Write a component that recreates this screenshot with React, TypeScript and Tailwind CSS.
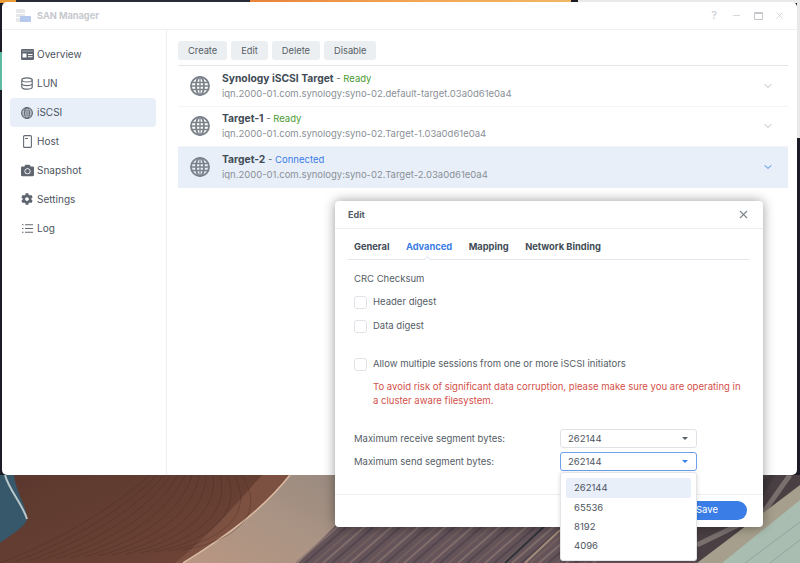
import { ChevronDown, Minus, X } from "lucide-react";
import { FaCamera, FaCog } from "react-icons/fa";
import type { ReactNode } from "react";

const font = { fontFamily: 'Inter, "Noto Sans", sans-serif' };

function Wallpaper() {
  const grain = Array.from({ length: 34 }, (_, i) => i);
  return (
    <svg className="absolute inset-0" width="800" height="563" viewBox="0 0 800 563">
      <defs>
        <linearGradient id="wood" x1="0" y1="0" x2="1" y2="0.3">
          <stop offset="0" stopColor="#5a372d" />
          <stop offset="0.55" stopColor="#6f4537" />
          <stop offset="0.9" stopColor="#4f2d26" />
        </linearGradient>
        <linearGradient id="band" x1="0" y1="1" x2="1" y2="0">
          <stop offset="0" stopColor="#b99682" />
          <stop offset="0.5" stopColor="#ab9484" />
          <stop offset="1" stopColor="#98897f" />
        </linearGradient>
        <linearGradient id="top" x1="0" y1="0" x2="1" y2="0">
          <stop offset="0" stopColor="#e8823a" />
          <stop offset="0.5" stopColor="#f2a553" />
          <stop offset="1" stopColor="#f0b766" />
        </linearGradient>
      </defs>
      <rect width="800" height="563" fill="#1b1c26" />
      <rect x="0" y="0" width="16" height="3" fill="#e79a35" />
      <rect x="16" y="0" width="234" height="3" fill="#2a2d38" />
      <rect x="250" y="0" width="321" height="3" fill="url(#top)" />
      <rect x="578" y="0" width="222" height="3" fill="#e9e9e9" />
      <rect x="797" y="3" width="3" height="135" fill="#e9e9e9" />
      <rect x="0" y="52" width="2" height="38" fill="#5fb8a0" />
      <rect x="0" y="475" width="800" height="88" fill="url(#wood)" />
      {/* blue rock, bottom left */}
      <path d="M0 475H14C16 492 26 505 27 518C27 526 12 534 0 543Z" fill="#37586a" />
      <path d="M5 475C9 490 23 505 27 519" stroke="#b9c8cb" strokeWidth="2" fill="none" />
      {/* pale band of the wood */}
      <path d="M262 475C235 505 215 530 175 563H270L330 475Z" fill="#7e5342" opacity="0.9" />
      <path d="M183 563C228 535 262 510 290 475H345V563Z" fill="url(#band)" />
      <path d="M183 563C228 535 262 510 290 475" stroke="#dcbba3" strokeWidth="1.500" fill="none" />
      <path d="M298 563L345 516L345 475H800V563Z" fill="#64545a" />
      {grain.map((i) => (
        <path
          key={i}
          d={`M${296 + i * 9} 563L${342 + i * 9} 523`}
          stroke={i % 3 === 0 ? "#8a7670" : i % 3 === 1 ? "#4e4148" : "#75625f"}
          strokeWidth="2"
          fill="none"
          opacity="0.75"
        />
      ))}
      <path d="M505 563L548 523" stroke="#2f3238" strokeWidth="2" fill="none" />
      <path d="M525 563L560 530" stroke="#a08a78" strokeWidth="2" fill="none" />
      {/* right side: dark streaks, tan line and pale sand */}
      <path d="M697 563V520L770 475H800V500L715 563Z" fill="#4a4044" />
      <path d="M697 545L763 513L790 475" stroke="#8d8580" strokeWidth="5" fill="none" opacity="0.7" />
      <path d="M697 527H763V475H775L745 527" fill="#3a3338" opacity="0.6" />
      <path d="M697 563L800 485V563Z" fill="#a69f8d" />
      <path d="M722 563L800 500V563Z" fill="#a9bdb1" />
      <path d="M745 563L800 522M770 563L800 540" stroke="#8fa6a0" strokeWidth="1" fill="none" />
      {grain.slice(0, 14).map((i) => (
        <path
          key={i}
          d={`M${i * 14} ${563 - i} C${60 + i * 14} 540 ${110 + i * 12} 510 ${150 + i * 7} 475`}
          stroke="#3f2420"
          strokeWidth="1"
          fill="none"
          opacity="0.3"
        />
      ))}
    </svg>
  );
}

function GlobeIcon({ size, color }: { size: number; color: string }) {
  return (
    <svg width={size} height={size} viewBox="0 0 20 20" fill="none" stroke={color} strokeWidth="1.900">
      <circle cx="10" cy="10" r="9" />
      <ellipse cx="10" cy="10" rx="4" ry="9" />
      <path d="M10 1v18M1.500 6.500h17M1 10h18M1.500 13.500h17" strokeWidth="1.300" />
    </svg>
  );
}

function DbIcon() {
  return (
    <svg width="12" height="13" viewBox="0 0 12 13" fill="none" stroke="#646b74" strokeWidth="1.200">
      <path d="M.8 3C.8 1.700 3 .8 6 .8s5.200.9 5.200 2.200v7c0 1.300-2.200 2.200-5.200 2.200S.8 11.300.8 10z" />
      <path d="M.8 3.500c.8 1 3 1.500 5.200 1.500s4.400-.5 5.200-1.500M.8 7.300c.8.800 3 1.300 5.200 1.300s4.400-.5 5.200-1.300" />
    </svg>
  );
}

const navItems: { label: string; icon: ReactNode; active?: boolean }[] = [
  {
    label: "Overview",
    icon: (
      <svg width="13" height="11" viewBox="0 0 13 11">
        <rect width="13" height="11" rx="1.200" fill="#5f6670" />
        <rect x="1" y="1.600" width="11" height="1" fill="#fff" opacity="0.4" />
        <rect x="1.500" y="4.500" width="4" height="4" fill="#fff" />
        <rect x="7" y="5" width="4.500" height="1" fill="#fff" />
        <rect x="7" y="7.200" width="4.500" height="1" fill="#fff" />
      </svg>
    ),
  },
  { label: "LUN", icon: <DbIcon /> },
  { label: "iSCSI", icon: <GlobeIcon size={12} color="#5f6670" />, active: true },
  {
    label: "Host",
    icon: (
      <svg width="9" height="13" viewBox="0 0 9 13" fill="none" stroke="#646b74" strokeWidth="1.100">
        <rect x="0.600" y="0.600" width="7.800" height="11.800" rx="1" />
        <path d="M2 3.500h3" />
      </svg>
    ),
  },
  { label: "Snapshot", icon: <FaCamera size={13} color="#5f6670" /> },
  { label: "Settings", icon: <FaCog size={12} color="#5f6670" /> },
  {
    label: "Log",
    icon: (
      <svg width="11" height="9" viewBox="0 0 11 9" fill="none" stroke="#646b74" strokeWidth="1.100">
        <path d="M0 .7h1.500M3 .7h8M0 4.500h1.500M3 4.500h8M0 8.300h1.500M3 8.300h8" />
      </svg>
    ),
  },
];

function Sidebar() {
  return (
    <aside className="w-[165px] shrink-0 border-r border-[#eceef0] pl-2 pr-[10px] pt-[10.500px]">
      {navItems.map((item) => (
        <div
          key={item.label}
          className={`flex h-[28.900px] items-center rounded-[4px] pl-2 text-[10px] text-[#4c545e] ${item.active ? "bg-[#e8eff9]" : ""}`}
        >
          <span className="flex w-[19px] justify-center pr-[1px]">{item.icon}</span>
          <span>{item.label}</span>
        </div>
      ))}
    </aside>
  );
}

const targets = [
  {
    name: "Synology iSCSI Target",
    status: "Ready",
    iqn: "iqn.2000-01.com.synology:syno-02.default-target.03a0d61e0a4",
  },
  { name: "Target-1", status: "Ready", iqn: "iqn.2000-01.com.synology:syno-02.Target-1.03a0d61e0a4" },
  {
    name: "Target-2",
    status: "Connected",
    iqn: "iqn.2000-01.com.synology:syno-02.Target-2.03a0d61e0a4",
    selected: true,
  },
];

function TargetList() {
  return (
    <div className="mt-[5px] border-t border-[#e3e5e8]">
      {targets.map((t) => (
        <div
          key={t.name}
          className={`flex h-[40.500px] items-center pl-[12px] pr-[14px] ${t.selected ? "bg-[#e8eff9]" : "border-b border-[#f3f4f5]"}`}
        >
          <GlobeIcon size={20} color="#7b828a" />
          <div className="ml-[12px] flex-1 leading-[15px]">
            <div className="text-[9.500px]">
              <span className="text-[10.300px] font-bold text-[#414b55]">{t.name}</span>
              <span className="text-[#5d656e]"> - </span>
              <span className={t.status === "Ready" ? "text-[#4a9a32]" : "text-[#3a7de6]"}>{t.status}</span>
            </div>
            <div className="text-[9.500px] text-[#8a9097]">{t.iqn}</div>
          </div>
          <ChevronDown size={12} color={t.selected ? "#3a7de6" : "#b8bcc2"} strokeWidth={2} />
        </div>
      ))}
    </div>
  );
}

function Checkbox({ label }: { label: string }) {
  return (
    <div className="flex items-center">
      <span className="h-[13px] w-[13px] rounded-[3px] border border-[#dfe3e8] bg-white" />
      <span className="ml-[6px] text-[9.500px] text-[#555d66]">{label}</span>
    </div>
  );
}

function SelectBox({ focused }: { focused?: boolean }) {
  return (
    <div
      className={`flex h-[19px] w-[137px] items-center justify-between rounded-[3px] border bg-white pl-[7px] pr-[8px] text-[9.500px] text-[#4c545e] ${focused ? "border-[#6d9fea]" : "border-[#dfe3e8]"}`}
    >
      262144
      <span
        className={`h-0 w-0 border-x-[3.500px] border-t-[3.500px] border-x-transparent ${focused ? "border-t-[#3a7de6]" : "border-t-[#555d66]"}`}
      />
    </div>
  );
}

function EditDialog() {
  const tabs = ["General", "Advanced", "Mapping", "Network Binding"];
  return (
    <div className="absolute left-[335px] top-[201px] flex h-[326px] w-[428px] flex-col rounded-[4px] bg-white shadow-[0_0_12px_rgba(0,0,0,0.4)]">
      <div className="flex h-[28px] shrink-0 items-center justify-between border-b border-[#eceef0] pl-[13px] pr-[13px]">
        <span className="text-[9px] font-bold text-[#555d66]">Edit</span>
        <X size={13} color="#7b828a" strokeWidth={2} />
      </div>
      <div className="relative mx-[13px] flex h-[31px] shrink-0 items-center gap-[16.500px] border-b border-[#e3e8ef] pl-[6px] pt-[5px] text-[9.300px] font-bold text-[#414b55]">
        {tabs.map((tab) => (
          <span key={tab} className={tab === "Advanced" ? "text-[#3a7de6]" : ""}>
            {tab}
          </span>
        ))}
        <span className="absolute bottom-[-3px] left-[77px] h-[5px] w-[5px] rotate-45 border-l border-t border-[#e3e8ef] bg-white" />
      </div>
      <div className="flex flex-1 flex-col px-[19px] pt-[12px]">
        <div className="text-[9.500px] leading-[13px] text-[#555d66]">CRC Checksum</div>
        <div className="mt-[10px] flex flex-col gap-[9.750px]">
          <Checkbox label="Header digest" />
          <Checkbox label="Data digest" />
        </div>
        <div className="mt-[23.750px]">
          <Checkbox label="Allow multiple sessions from one or more iSCSI initiators" />
        </div>
        <p className="ml-[19px] mt-[9px] text-[9.550px] leading-[14px] text-[#d4504a]">
          To avoid risk of significant data corruption, please make sure you are operating in a cluster aware
          filesystem.
        </p>
        <div className="mt-[21px] flex flex-col gap-[4px]">
          <div className="flex items-center justify-between pr-[47px] text-[9.500px] text-[#555d66]">
            Maximum receive segment bytes:
            <SelectBox />
          </div>
          <div className="flex items-center justify-between pr-[47px] text-[9.500px] text-[#555d66]">
            Maximum send segment bytes:
            <SelectBox focused />
          </div>
        </div>
      </div>
      <div className="flex h-[33px] shrink-0 items-start justify-end border-t border-[#eceef0] pr-[16px] pt-[6px]">
        <button className="h-[19px] w-[80px] rounded-full bg-[#3a7de6] text-[9.500px] text-white">Save</button>
      </div>
    </div>
  );
}

function Dropdown() {
  return (
    <div className="absolute left-[560px] top-[472px] h-[89px] w-[137px] rounded-[3px] border border-[#e3e5e8] bg-white p-[5px] text-[9.500px] text-[#4c545e] shadow-[0_1px_4px_rgba(0,0,0,0.15)]">
      {["262144", "65536", "8192", "4096"].map((v, i) => (
        <div
          key={v}
          className={`flex items-center rounded-[2px] pl-[8px] pt-[1px] ${i === 0 ? "h-[20px] bg-[#e8eff9]" : "h-[19px]"}`}
        >
          {v}
        </div>
      ))}
    </div>
  );
}

export default function App() {
  return (
    <div className="relative h-[563px] w-[800px] overflow-hidden" style={font}>
      <Wallpaper />
      <div className="absolute left-[2px] top-[2px] flex h-[473px] w-[795px] flex-col overflow-hidden rounded-[5px] bg-white">
        <div className="flex h-[28px] shrink-0 items-center justify-between border-b border-[#eff0f2] pl-[13px] pr-[12px]">
          <div className="flex items-center gap-[6px] pt-[1px]">
            <svg width="16" height="15" viewBox="0 0 16 15">
              <rect x="1" y="0" width="9" height="13" rx="1.500" fill="#e6e7e9" />
              <rect x="1" y="4" width="9" height="1" fill="#fff" />
              <rect x="1" y="8" width="9" height="1" fill="#fff" />
              <rect x="5" y="7" width="11" height="6" rx="1" fill="#b5c9ef" />
            </svg>
            <span className="text-[9.200px] font-bold text-[#c6c9cd]">SAN Manager</span>
          </div>
          <div className="flex items-center gap-[11.500px] text-[#c4c7cb]">
            <span className="w-[11px] text-center text-[11px] leading-none">?</span>
            <Minus size={11} strokeWidth={1.500} />
            <span className="h-[8px] w-[9px] rounded-[1px] border border-t-2 border-[#c4c7cb]" />
            <X size={11} strokeWidth={1.500} />
          </div>
        </div>
        <div className="flex flex-1">
          <Sidebar />
          <main className="flex-1 pl-[11px] pr-[9px] pt-[11px]">
            <div className="flex gap-[4px]">
              {["Create", "Edit", "Delete", "Disable"].map((b) => (
                <button
                  key={b}
                  className="h-[19px] rounded-[3px] bg-[#eceff2] px-[10px] text-[9.300px] text-[#555d66]"
                >
                  {b}
                </button>
              ))}
            </div>
            <TargetList />
          </main>
        </div>
      </div>
      <EditDialog />
      <Dropdown />
    </div>
  );
}
